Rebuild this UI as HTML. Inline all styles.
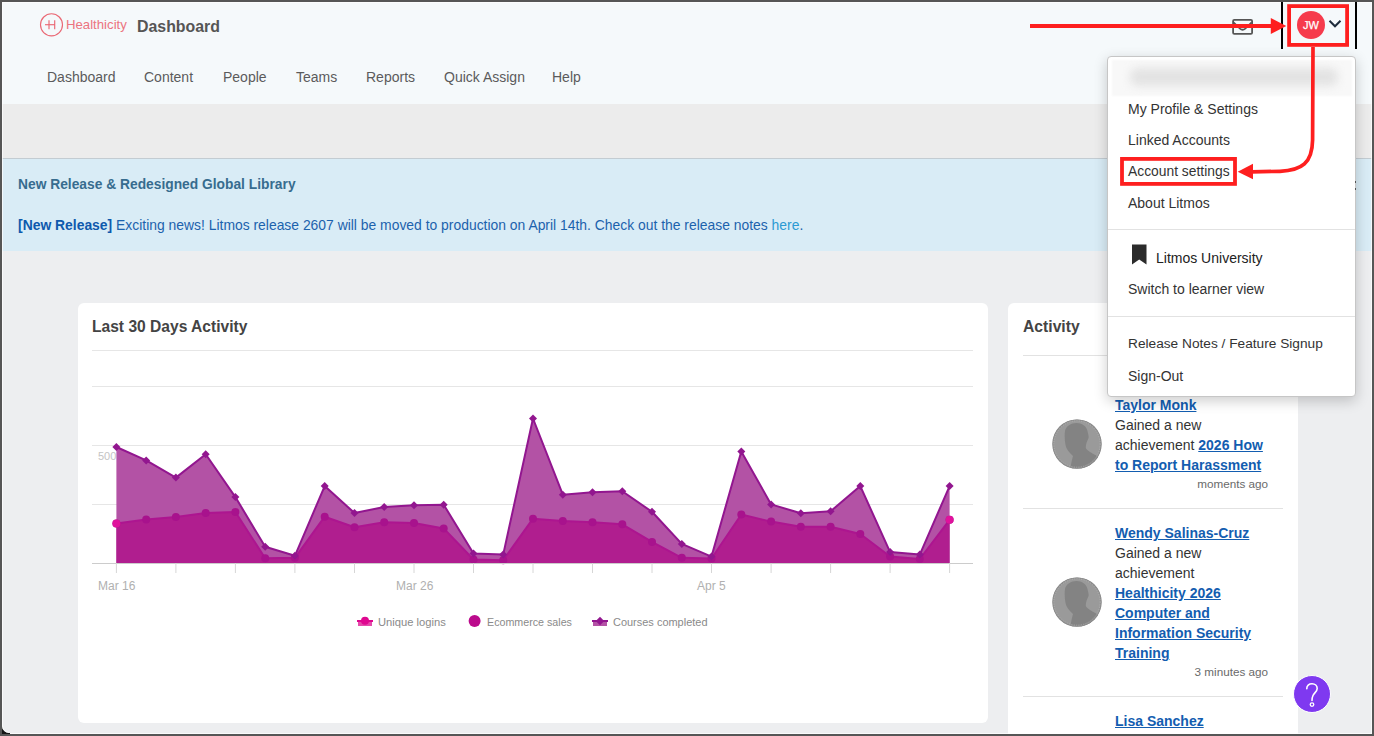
<!DOCTYPE html>
<html><head><meta charset="utf-8">
<style>
*{box-sizing:border-box;margin:0;padding:0}
html,body{width:1374px;height:736px;overflow:hidden}
body{position:relative;background:#edeef0;font-family:"Liberation Sans",sans-serif;color:#333}
.a{position:absolute;white-space:nowrap}
#frame{position:absolute;left:0;top:0;width:1374px;height:736px;border:2px solid #565656;box-shadow:inset 0 0 0 1px rgba(255,255,255,.7);z-index:45}
#hdr{position:absolute;left:0;top:0;width:1374px;height:104px;background:#f5f9fb}
#band{position:absolute;left:0;top:104px;width:1374px;height:54px;background:#ececec}
#banner{position:absolute;left:0;top:158px;width:1374px;height:93px;background:#d9ecf6;border-top:1px solid #c3ccd2}
.nav{position:absolute;top:68.5px;font-size:14px;color:#5b5b5b;line-height:16px}
.card{position:absolute;background:#fff;border-radius:6px}
.dd{position:absolute;left:1107px;top:56px;width:249px;height:341px;background:#fff;border:1px solid #c6c6c6;border-radius:4px;box-shadow:0 4px 14px rgba(0,0,0,.2);z-index:20}
.ddi{position:absolute;left:20px;font-size:14px;color:#333;line-height:16px}
.sep{position:absolute;left:0;width:247px;height:1px;background:#e2e2e2}
.act{position:absolute;left:1115px;font-size:14px;line-height:20px;color:#333}
.lnk{color:#135db0;font-weight:bold;text-decoration:underline}
.ago{position:absolute;font-size:11.7px;color:#6a6a6a;text-align:right;line-height:14px}
</style></head><body>
<div id="hdr"></div>
<div id="band"></div>
<div id="banner"></div>

<!-- logo -->
<svg class="a" style="left:38px;top:11px" width="28" height="28" viewBox="38 11 28 28">
<circle cx="51.5" cy="24.8" r="11" fill="none" stroke="#ea6874" stroke-width="1.15"/>
<line x1="45" x2="55" y1="24.7" y2="24.7" stroke="#ea6874" stroke-width="1.15"/>
<line x1="49" x2="49" y1="20.3" y2="29.2" stroke="#ea6874" stroke-width="1.15"/>
<line x1="54.7" x2="54.7" y1="20.3" y2="29.2" stroke="#ea6874" stroke-width="1.15"/>
</svg>
<div class="a" style="left:66px;top:17px;font-size:13.2px;color:#ec7480;line-height:16px">Healthicity</div>
<div class="a" style="left:137px;top:18px;font-size:15.9px;font-weight:bold;color:#555;line-height:18px">Dashboard</div>

<div class="nav" style="left:47px">Dashboard</div>
<div class="nav" style="left:144px">Content</div>
<div class="nav" style="left:223px">People</div>
<div class="nav" style="left:296px">Teams</div>
<div class="nav" style="left:366px">Reports</div>
<div class="nav" style="left:444px">Quick Assign</div>
<div class="nav" style="left:552px">Help</div>

<!-- mail icon -->
<svg class="a" style="left:1230px;top:17px" width="26" height="20" viewBox="1230 17 26 20">
<rect x="1233.1" y="19.9" width="19" height="14" rx="1.2" fill="none" stroke="#555" stroke-width="1.8"/>
<path d="M1233.5,22.3 L1240,28.6 Q1242.6,31 1245.2,28.6 L1251.7,22.3" fill="none" stroke="#555" stroke-width="1.8"/>
</svg>

<!-- avatar -->
<div class="a" style="left:1297px;top:11px;width:28px;height:28px;border-radius:50%;background:#f63b4c;color:#fff;font-size:11px;-webkit-text-stroke:0.25px #fff;line-height:28px;text-align:center">JW</div>
<svg class="a" style="left:1326px;top:17px" width="18" height="14" viewBox="1326 17 18 14">
<path d="M1329.5,20.7 L1335,26.3 L1340.5,20.7" fill="none" stroke="#1d2b3b" stroke-width="2"/>
</svg>

<!-- banner text -->
<div class="a" style="left:18px;top:176px;font-size:13.8px;font-weight:bold;color:#376c8f;line-height:18px">New Release &amp; Redesigned Global Library</div>
<div class="a" style="left:18px;top:216px;font-size:13.9px;color:#1c62ad;line-height:18px"><b style="color:#0e59ad">[New Release]</b> Exciting news! Litmos release 2607 will be moved to production on April 14th. Check out the release notes <span style="color:#2b9ad3">here</span>.</div>

<!-- chart card -->
<div class="card" style="left:78px;top:303px;width:910px;height:420px"></div>
<div class="a" style="left:92px;top:318px;font-size:15.6px;font-weight:bold;color:#444;line-height:18px">Last 30 Days Activity</div>
<div class="a" style="left:92px;top:350px;width:881px;height:1px;background:#e6e6e6"></div>
<svg class="a" style="left:0;top:0" width="1000" height="640" viewBox="0 0 1000 640">
<line x1="92" x2="973" y1="386.5" y2="386.5" stroke="#e6e6e6" stroke-width="1"/>
<line x1="92" x2="973" y1="445.5" y2="445.5" stroke="#e6e6e6" stroke-width="1"/>
<line x1="92" x2="973" y1="504.5" y2="504.5" stroke="#e6e6e6" stroke-width="1"/>
<text x="98" y="460" font-size="11" fill="#c4c4c4" font-family="Liberation Sans">500</text>
<path d="M116.4,563 L116.4,447.0 146.2,460.4 175.9,477.6 205.7,454.3 235.4,497.1 265.2,546.8 294.9,555.8 324.7,486.1 354.5,513.0 384.2,507.0 414.0,505.2 443.7,504.7 473.5,553.6 503.2,554.6 533.0,418.5 562.8,494.7 592.5,492.2 622.3,491.3 652.0,511.8 681.8,543.9 711.5,556.6 741.3,451.4 771.1,504.4 800.8,513.2 830.6,511.3 860.3,486.1 890.1,552.1 919.8,554.6 949.6,486.1 L949.6,563 Z" fill="#b352a5"/>
<polyline points="116.4,447.0 146.2,460.4 175.9,477.6 205.7,454.3 235.4,497.1 265.2,546.8 294.9,555.8 324.7,486.1 354.5,513.0 384.2,507.0 414.0,505.2 443.7,504.7 473.5,553.6 503.2,554.6 533.0,418.5 562.8,494.7 592.5,492.2 622.3,491.3 652.0,511.8 681.8,543.9 711.5,556.6 741.3,451.4 771.1,504.4 800.8,513.2 830.6,511.3 860.3,486.1 890.1,552.1 919.8,554.6 949.6,486.1" fill="none" stroke="#92168f" stroke-width="2" stroke-linejoin="round"/>
<path d="M116.4,563 L116.4,523.5 146.2,519.4 175.9,517.0 205.7,513.0 235.4,512.0 265.2,558.3 294.9,557.8 324.7,516.7 354.5,527.2 384.2,522.3 414.0,523.0 443.7,528.4 473.5,559.5 503.2,560.2 533.0,518.7 562.8,521.1 592.5,522.3 622.3,524.3 652.0,541.9 681.8,557.8 711.5,558.5 741.3,514.5 771.1,521.6 800.8,526.7 830.6,526.7 860.3,534.0 890.1,556.5 919.8,559.0 949.6,519.8 L949.6,563 Z" fill="#b01e8f"/>
<polyline points="116.4,523.5 146.2,519.4 175.9,517.0 205.7,513.0 235.4,512.0 265.2,558.3 294.9,557.8 324.7,516.7 354.5,527.2 384.2,522.3 414.0,523.0 443.7,528.4 473.5,559.5 503.2,560.2 533.0,518.7 562.8,521.1 592.5,522.3 622.3,524.3 652.0,541.9 681.8,557.8 711.5,558.5 741.3,514.5 771.1,521.6 800.8,526.7 830.6,526.7 860.3,534.0 890.1,556.5 919.8,559.0 949.6,519.8" fill="none" stroke="#ad1590" stroke-width="2" stroke-linejoin="round"/>
<circle cx="116.4" cy="523.5" r="4" fill="#a8128d"/>
<circle cx="146.2" cy="519.4" r="4" fill="#a8128d"/>
<circle cx="175.9" cy="517.0" r="4" fill="#a8128d"/>
<circle cx="205.7" cy="513.0" r="4" fill="#a8128d"/>
<circle cx="235.4" cy="512.0" r="4" fill="#a8128d"/>
<circle cx="265.2" cy="558.3" r="4" fill="#a8128d"/>
<circle cx="294.9" cy="557.8" r="4" fill="#a8128d"/>
<circle cx="324.7" cy="516.7" r="4" fill="#a8128d"/>
<circle cx="354.5" cy="527.2" r="4" fill="#a8128d"/>
<circle cx="384.2" cy="522.3" r="4" fill="#a8128d"/>
<circle cx="414.0" cy="523.0" r="4" fill="#a8128d"/>
<circle cx="443.7" cy="528.4" r="4" fill="#a8128d"/>
<circle cx="473.5" cy="559.5" r="4" fill="#a8128d"/>
<circle cx="503.2" cy="560.2" r="4" fill="#a8128d"/>
<circle cx="533.0" cy="518.7" r="4" fill="#a8128d"/>
<circle cx="562.8" cy="521.1" r="4" fill="#a8128d"/>
<circle cx="592.5" cy="522.3" r="4" fill="#a8128d"/>
<circle cx="622.3" cy="524.3" r="4" fill="#a8128d"/>
<circle cx="652.0" cy="541.9" r="4" fill="#a8128d"/>
<circle cx="681.8" cy="557.8" r="4" fill="#a8128d"/>
<circle cx="711.5" cy="558.5" r="4" fill="#a8128d"/>
<circle cx="741.3" cy="514.5" r="4" fill="#a8128d"/>
<circle cx="771.1" cy="521.6" r="4" fill="#a8128d"/>
<circle cx="800.8" cy="526.7" r="4" fill="#a8128d"/>
<circle cx="830.6" cy="526.7" r="4" fill="#a8128d"/>
<circle cx="860.3" cy="534.0" r="4" fill="#a8128d"/>
<circle cx="890.1" cy="556.5" r="4" fill="#a8128d"/>
<circle cx="919.8" cy="559.0" r="4" fill="#a8128d"/>
<circle cx="949.6" cy="519.8" r="4" fill="#a8128d"/>
<path d="M116.4,443.0 L120.4,447.0 L116.4,451.0 L112.4,447.0 Z" fill="#92168f"/>
<path d="M146.2,456.4 L150.2,460.4 L146.2,464.4 L142.2,460.4 Z" fill="#92168f"/>
<path d="M175.9,473.6 L179.9,477.6 L175.9,481.6 L171.9,477.6 Z" fill="#92168f"/>
<path d="M205.7,450.3 L209.7,454.3 L205.7,458.3 L201.7,454.3 Z" fill="#92168f"/>
<path d="M235.4,493.1 L239.4,497.1 L235.4,501.1 L231.4,497.1 Z" fill="#92168f"/>
<path d="M265.2,542.8 L269.2,546.8 L265.2,550.8 L261.2,546.8 Z" fill="#92168f"/>
<path d="M294.9,551.8 L298.9,555.8 L294.9,559.8 L290.9,555.8 Z" fill="#92168f"/>
<path d="M324.7,482.1 L328.7,486.1 L324.7,490.1 L320.7,486.1 Z" fill="#92168f"/>
<path d="M354.5,509.0 L358.5,513.0 L354.5,517.0 L350.5,513.0 Z" fill="#92168f"/>
<path d="M384.2,503.0 L388.2,507.0 L384.2,511.0 L380.2,507.0 Z" fill="#92168f"/>
<path d="M414.0,501.2 L418.0,505.2 L414.0,509.2 L410.0,505.2 Z" fill="#92168f"/>
<path d="M443.7,500.7 L447.7,504.7 L443.7,508.7 L439.7,504.7 Z" fill="#92168f"/>
<path d="M473.5,549.6 L477.5,553.6 L473.5,557.6 L469.5,553.6 Z" fill="#92168f"/>
<path d="M503.2,550.6 L507.2,554.6 L503.2,558.6 L499.2,554.6 Z" fill="#92168f"/>
<path d="M533.0,414.5 L537.0,418.5 L533.0,422.5 L529.0,418.5 Z" fill="#92168f"/>
<path d="M562.8,490.7 L566.8,494.7 L562.8,498.7 L558.8,494.7 Z" fill="#92168f"/>
<path d="M592.5,488.2 L596.5,492.2 L592.5,496.2 L588.5,492.2 Z" fill="#92168f"/>
<path d="M622.3,487.3 L626.3,491.3 L622.3,495.3 L618.3,491.3 Z" fill="#92168f"/>
<path d="M652.0,507.8 L656.0,511.8 L652.0,515.8 L648.0,511.8 Z" fill="#92168f"/>
<path d="M681.8,539.9 L685.8,543.9 L681.8,547.9 L677.8,543.9 Z" fill="#92168f"/>
<path d="M711.5,552.6 L715.5,556.6 L711.5,560.6 L707.5,556.6 Z" fill="#92168f"/>
<path d="M741.3,447.4 L745.3,451.4 L741.3,455.4 L737.3,451.4 Z" fill="#92168f"/>
<path d="M771.1,500.4 L775.1,504.4 L771.1,508.4 L767.1,504.4 Z" fill="#92168f"/>
<path d="M800.8,509.2 L804.8,513.2 L800.8,517.2 L796.8,513.2 Z" fill="#92168f"/>
<path d="M830.6,507.3 L834.6,511.3 L830.6,515.3 L826.6,511.3 Z" fill="#92168f"/>
<path d="M860.3,482.1 L864.3,486.1 L860.3,490.1 L856.3,486.1 Z" fill="#92168f"/>
<path d="M890.1,548.1 L894.1,552.1 L890.1,556.1 L886.1,552.1 Z" fill="#92168f"/>
<path d="M919.8,550.6 L923.8,554.6 L919.8,558.6 L915.8,554.6 Z" fill="#92168f"/>
<path d="M949.6,482.1 L953.6,486.1 L949.6,490.1 L945.6,486.1 Z" fill="#92168f"/>
<circle cx="116.4" cy="523.5" r="4" fill="#e0129c"/>
<circle cx="949.6" cy="519.8" r="4" fill="#e0129c"/>
<line x1="92" x2="973" y1="563.5" y2="563.5" stroke="#cccccc" stroke-width="1"/>
<line x1="116.4" x2="116.4" y1="563" y2="573" stroke="#d6d6d6" stroke-width="1"/>
<line x1="175.9" x2="175.9" y1="563" y2="573" stroke="#d6d6d6" stroke-width="1"/>
<line x1="235.4" x2="235.4" y1="563" y2="573" stroke="#d6d6d6" stroke-width="1"/>
<line x1="294.9" x2="294.9" y1="563" y2="573" stroke="#d6d6d6" stroke-width="1"/>
<line x1="354.5" x2="354.5" y1="563" y2="573" stroke="#d6d6d6" stroke-width="1"/>
<line x1="414.0" x2="414.0" y1="563" y2="573" stroke="#d6d6d6" stroke-width="1"/>
<line x1="473.5" x2="473.5" y1="563" y2="573" stroke="#d6d6d6" stroke-width="1"/>
<line x1="533.0" x2="533.0" y1="563" y2="573" stroke="#d6d6d6" stroke-width="1"/>
<line x1="592.5" x2="592.5" y1="563" y2="573" stroke="#d6d6d6" stroke-width="1"/>
<line x1="652.0" x2="652.0" y1="563" y2="573" stroke="#d6d6d6" stroke-width="1"/>
<line x1="711.5" x2="711.5" y1="563" y2="573" stroke="#d6d6d6" stroke-width="1"/>
<line x1="771.1" x2="771.1" y1="563" y2="573" stroke="#d6d6d6" stroke-width="1"/>
<line x1="830.6" x2="830.6" y1="563" y2="573" stroke="#d6d6d6" stroke-width="1"/>
<line x1="890.1" x2="890.1" y1="563" y2="573" stroke="#d6d6d6" stroke-width="1"/>
<line x1="949.6" x2="949.6" y1="563" y2="573" stroke="#d6d6d6" stroke-width="1"/>
</svg>
<div class="a" style="left:98px;top:579px;font-size:12px;color:#b0b0b0;line-height:14px">Mar 16</div>
<div class="a" style="left:396px;top:579px;font-size:12px;color:#b0b0b0;line-height:14px">Mar 26</div>
<div class="a" style="left:697px;top:579px;font-size:12px;color:#b0b0b0;line-height:14px">Apr 5</div>
<!-- legend -->
<svg class="a" style="left:350px;top:612px" width="270" height="20" viewBox="350 612 270 20">
<rect x="358" y="621" width="14" height="5" fill="#e44bab"/>
<line x1="357" x2="373" y1="621" y2="621" stroke="#df0790" stroke-width="2"/>
<circle cx="365" cy="620.8" r="4" fill="#df0790"/>
<circle cx="474.6" cy="620.9" r="6" fill="#bb0a8c"/>
<rect x="593" y="621" width="14" height="5" fill="#b352a5"/>
<line x1="592" x2="608" y1="621" y2="621" stroke="#92168f" stroke-width="2"/>
<path d="M600,616.8 L604.2,621 L600,625.2 L595.8,621 Z" fill="#92168f"/>
</svg>
<div class="a" style="left:378px;top:615px;font-size:11.2px;color:#8a8a8a;line-height:14px">Unique logins</div>
<div class="a" style="left:487px;top:615px;font-size:10.7px;color:#8a8a8a;line-height:14px">Ecommerce sales</div>
<div class="a" style="left:613px;top:615px;font-size:10.97px;color:#8a8a8a;line-height:14px">Courses completed</div>

<!-- activity card -->
<div class="card" style="left:1008px;top:303px;width:290px;height:460px"></div>
<div class="a" style="left:1023px;top:318px;font-size:15.7px;font-weight:bold;color:#444;line-height:18px">Activity</div>
<div class="a" style="left:1023px;top:355px;width:260px;height:1px;background:#e2e2e2"></div>
<div class="a" style="left:1023px;top:508px;width:260px;height:1px;background:#e2e2e2"></div>
<div class="a" style="left:1023px;top:696px;width:260px;height:1px;background:#e2e2e2"></div>

<svg class="a" style="left:1052px;top:419px" width="50" height="50" viewBox="0 0 50 50">
<defs><clipPath id="c1"><circle cx="25" cy="25" r="24.6"/></clipPath></defs>
<circle cx="25" cy="25" r="24.6" fill="#9a9a9a"/>
<path clip-path="url(#c1)" d="M24.6,4 C30,4 34.5,7 35.5,12 C36,15 37,17 36.5,19 C36,21 35,22 34.5,24 C34,26 33.5,28 34,29.5 C36,32 41,35 46,37.5 L48,52 L18,52 C19,46 19.5,42 21,37 C17,33 14,30 13.5,26 C12.5,21 12.5,15 13,12 C14,7 19,4 24.6,4 Z" fill="#838383"/>
<circle cx="25" cy="25" r="24" fill="none" stroke="#8c8c8c" stroke-width="1.2"/>
<circle cx="25" cy="25" r="23.2" fill="none" stroke="#c4c4c4" stroke-width="0.5" stroke-dasharray="1.2 1.2"/>
</svg>
<svg class="a" style="left:1052px;top:577px" width="50" height="50" viewBox="0 0 50 50">
<defs><clipPath id="c2"><circle cx="25" cy="25" r="24.6"/></clipPath></defs>
<circle cx="25" cy="25" r="24.6" fill="#9a9a9a"/>
<path clip-path="url(#c2)" d="M24.6,4 C30,4 34.5,7 35.5,12 C36,15 37,17 36.5,19 C36,21 35,22 34.5,24 C34,26 33.5,28 34,29.5 C36,32 41,35 46,37.5 L48,52 L18,52 C19,46 19.5,42 21,37 C17,33 14,30 13.5,26 C12.5,21 12.5,15 13,12 C14,7 19,4 24.6,4 Z" fill="#838383"/>
<circle cx="25" cy="25" r="24" fill="none" stroke="#8c8c8c" stroke-width="1.2"/>
<circle cx="25" cy="25" r="23.2" fill="none" stroke="#c4c4c4" stroke-width="0.5" stroke-dasharray="1.2 1.2"/>
</svg>
<div class="act" style="top:395px"><span class="lnk">Taylor Monk</span><br>Gained a new<br>achievement <span class="lnk">2026 How</span><br><span class="lnk">to Report Harassment</span></div>
<div class="ago" style="left:1168px;top:477px;width:100px">moments ago</div>
<div class="act" style="top:523px"><span class="lnk">Wendy Salinas-Cruz</span><br>Gained a new<br>achievement<br><span class="lnk">Healthicity 2026</span><br><span class="lnk">Computer and</span><br><span class="lnk">Information Security</span><br><span class="lnk">Training</span></div>
<div class="ago" style="left:1168px;top:665px;width:100px">3 minutes ago</div>
<div class="act" style="top:711px"><span class="lnk">Lisa Sanchez</span></div>

<!-- help -->
<div class="a" style="left:1293px;top:674.5px;width:38px;height:38px;border-radius:50%;background:#7f39f0;border:1.6px solid #fff;z-index:30"></div>
<svg class="a" style="left:1293px;top:675px;z-index:31" width="38" height="38" viewBox="1293 675 38 38">
<path d="M1306.8,688.8 C1306.6,685.5 1309,683.8 1312,683.8 C1315,683.8 1317.2,685.8 1317.2,688.4 C1317.2,691.4 1314.4,692.6 1313,695.5 C1312.3,697 1312,698.5 1312,700.5" fill="none" stroke="#fff" stroke-width="1.6" stroke-linecap="round"/>
<circle cx="1312" cy="704.6" r="1.8" fill="none" stroke="#fff" stroke-width="1.3"/>
</svg>
<!-- dropdown -->
<div class="dd">
  <div style="position:absolute;left:4px;top:3px;width:240px;height:36px;background:#f8f8f8;filter:blur(1.2px)"></div>
  <div style="position:absolute;left:22px;top:11px;width:208px;height:18px;background:#e3e3e3;filter:blur(4px);border-radius:8px"></div>
  <div class="ddi" style="top:44px">My Profile &amp; Settings</div>
  <div class="ddi" style="top:75px">Linked Accounts</div>
  <div class="ddi" style="top:106px;font-size:13.85px">Account settings</div>
  <div class="ddi" style="top:138px">About Litmos</div>
  <div class="sep" style="top:172px"></div>
  <svg style="position:absolute;left:23px;top:187px" width="17" height="21" viewBox="0 0 17 21"><path d="M1,0.5 L15.5,0.5 L15.5,20.5 L8.2,15.5 L1,20.5 Z" fill="#2b2b2b"/></svg>
  <div class="ddi" style="left:48px;top:193px;color:#222">Litmos University</div>
  <div class="ddi" style="top:224px">Switch to learner view</div>
  <div class="sep" style="top:259px"></div>
  <div class="ddi" style="top:279px;font-size:13.7px">Release Notes / Feature Signup</div>
  <div class="ddi" style="top:311px">Sign-Out</div>
</div>

<div class="a" style="left:1355px;top:181px;width:1px;height:2px;background:#555;z-index:25"></div>
<div class="a" style="left:1355px;top:188px;width:1px;height:2px;background:#555;z-index:25"></div>
<!-- annotations -->
<svg class="a" style="left:0;top:0;z-index:50" width="1374" height="736" viewBox="0 0 1374 736">
<rect x="1281" y="2" width="2" height="47" fill="#000"/>
<rect x="1355" y="2" width="2" height="47" fill="#000"/>
<rect x="1030" y="24" width="243" height="4" fill="#fe1f1f"/>
<path d="M1270.8,18 L1286.3,25.9 L1270.8,33.9 Z" fill="#fe1f1f"/>
<rect x="1289.1" y="6.1" width="58" height="38.8" fill="none" stroke="#fe1f1f" stroke-width="3.8"/>
<path d="M1313,47 L1312.6,140 C1312.2,163 1302,170.5 1280,171.3 L1252,171.8" fill="none" stroke="#fe1f1f" stroke-width="3.7"/>
<path d="M1253,163.8 L1237.7,171.7 L1253,179.3 Z" fill="#fe1f1f"/>
<rect x="1122" y="158.9" width="113" height="25" fill="none" stroke="#fe1f1f" stroke-width="3.8"/>
</svg>

<div id="frame"></div>
<svg class="a" style="left:0;top:720px;z-index:60" width="16" height="16" viewBox="0 720 16 16">
<path d="M2,725 L2,734 L10,734 L10,733 A7,7 0 0 1 2,726 Z" fill="#161616"/>
<path d="M2.6,726 A6.4,6.4 0 0 0 9,732.4" fill="none" stroke="rgba(255,255,255,.75)" stroke-width="1"/>
</svg>
</body></html>
